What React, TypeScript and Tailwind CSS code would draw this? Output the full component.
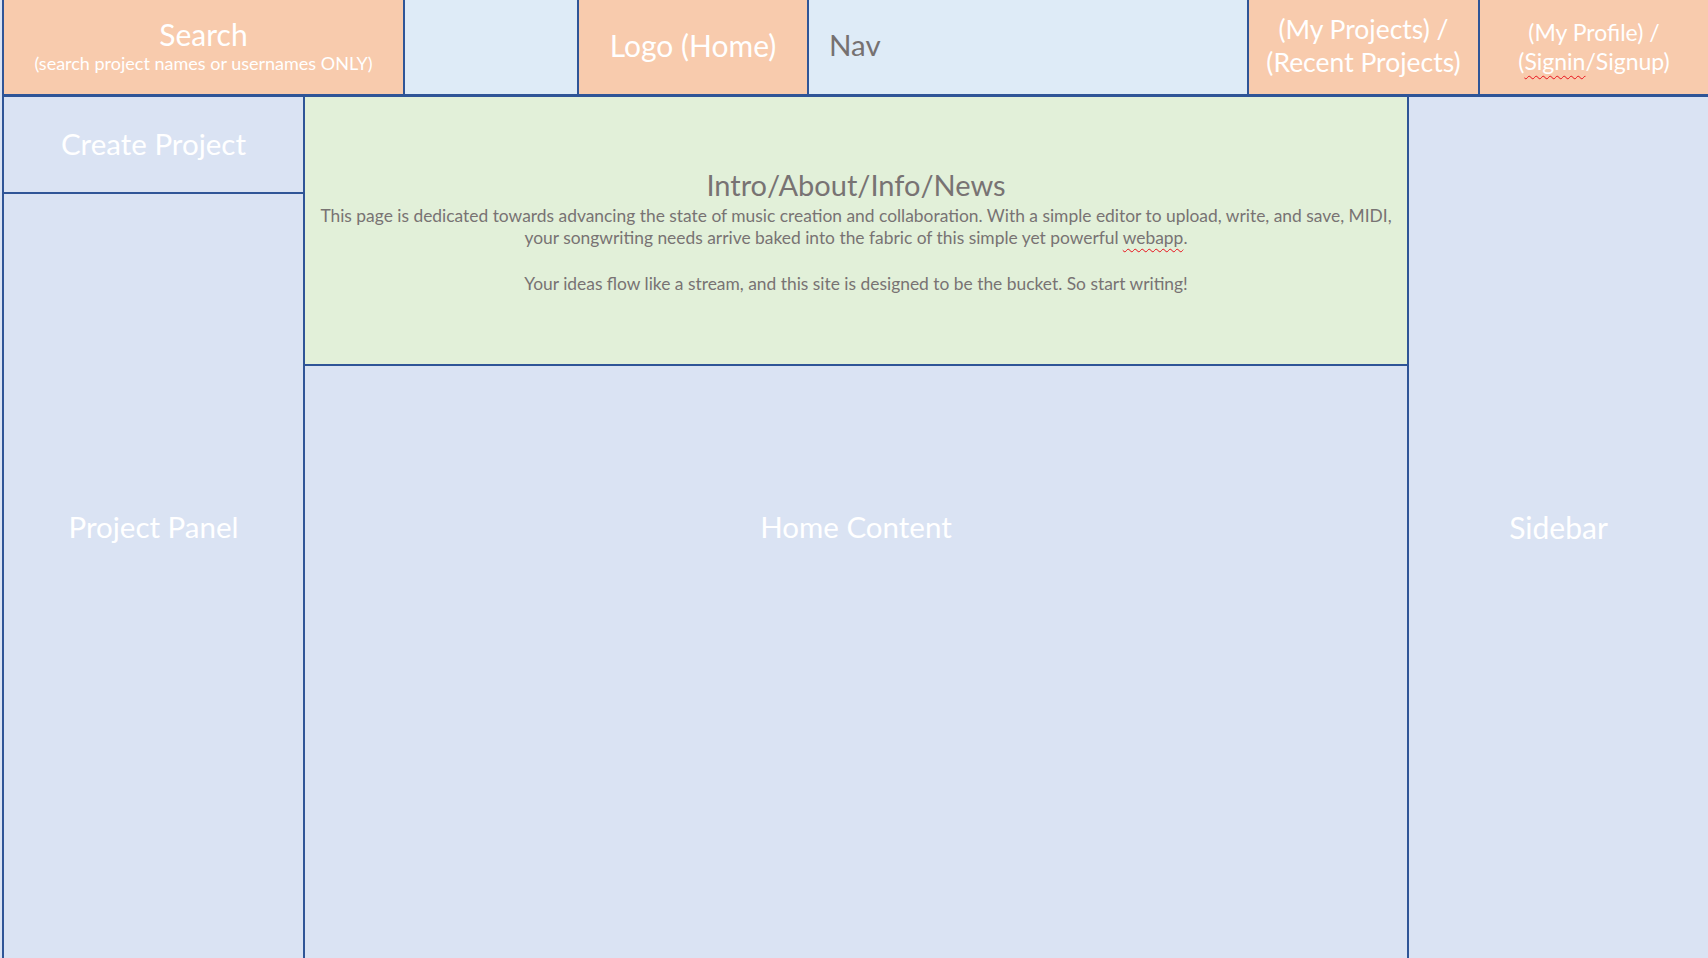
export default function App() {
  return (
    <div
      className="w-[1708px] h-[958px] overflow-hidden bg-[#DAE3F3] pl-[2px] flex flex-col"
      style={{ fontFamily: "Lato, 'Open Sans', sans-serif" }}
    >
      {/* Header */}
      <header className="flex h-[97px] border-b-[3px] border-[#2F5597] shrink-0">
        <div className="w-[401px] border-l-2 border-[#2F5597] bg-[#F8CBAD] flex flex-col items-center justify-center text-white">
          <span className="text-[30px] leading-[32px]">Search</span>
          <span className="text-[18px] leading-[26px]">(search project names or usernames ONLY)</span>
        </div>
        <div className="w-[174px] border-l-2 border-[#2F5597] bg-[#DEEBF7]" />
        <div className="w-[230px] border-l-2 border-[#2F5597] bg-[#F8CBAD] flex items-center justify-center pb-[3px] text-white text-[30px]">
          Logo (Home)
        </div>
        <div className="w-[440px] border-l-2 border-[#2F5597] bg-[#DEEBF7] flex items-center pl-[20px] pb-[4px] text-[#767171] text-[29.5px]">
          Nav
        </div>
        <div className="w-[231px] border-l-2 border-[#2F5597] bg-[#F8CBAD] flex flex-col items-center justify-center pb-[2px] text-white text-[26.5px] leading-[33px]">
          <span>(My Projects) /</span>
          <span>(Recent Projects)</span>
        </div>
        <div className="flex-1 border-l-2 border-[#2F5597] bg-[#F8CBAD] flex flex-col items-center justify-center text-white text-[23px] leading-[29px]">
          <span>(My Profile) /</span>
          <span>
            (<span className="underline decoration-wavy decoration-[#e8101a] underline-offset-[5px] decoration-1">Signin</span>/Signup)
          </span>
        </div>
      </header>

      {/* Body */}
      <div className="flex flex-1 min-h-0">
        {/* Left column */}
        <aside className="w-[303px] border-l-2 border-r-2 border-[#2F5597] flex flex-col">
          <div className="h-[97px] border-b-2 border-[#2F5597] flex items-center justify-center text-white text-[29.5px]">
            Create Project
          </div>
          <div className="flex-1 flex justify-center pt-[311px] text-white text-[29.5px]">
            Project Panel
          </div>
        </aside>

        {/* Center */}
        <main className="flex-1 flex flex-col">
          <section className="h-[269px] bg-[#E2F0D9] border-b-2 border-[#2F5597] pt-[71px] text-center text-[#787373]">
            <h2 className="text-[29px] leading-[33px]">Intro/About/Info/News</h2>
            <p className="mt-[4px] text-[17.4px] leading-[22px]">
              This page is dedicated towards advancing the state of music creation and collaboration. With a simple editor to upload, write, and save, MIDI,
              <br />
              your songwriting needs arrive baked into the fabric of this simple yet powerful{" "}
              <span className="underline decoration-wavy decoration-[#e8101a] underline-offset-[4px] decoration-1">webapp</span>.
            </p>
            <p className="mt-[24px] text-[17.4px] leading-[22px]">
              Your ideas flow like a stream, and this site is designed to be the bucket. So start writing!
            </p>
          </section>
          <div className="flex-1 flex justify-center pt-[139px] text-white text-[29.5px]">
            Home Content
          </div>
        </main>

        {/* Sidebar */}
        <aside className="w-[301px] border-l-2 border-[#2F5597] flex items-center justify-center text-white text-[30px]">
          Sidebar
        </aside>
      </div>
    </div>
  );
}
